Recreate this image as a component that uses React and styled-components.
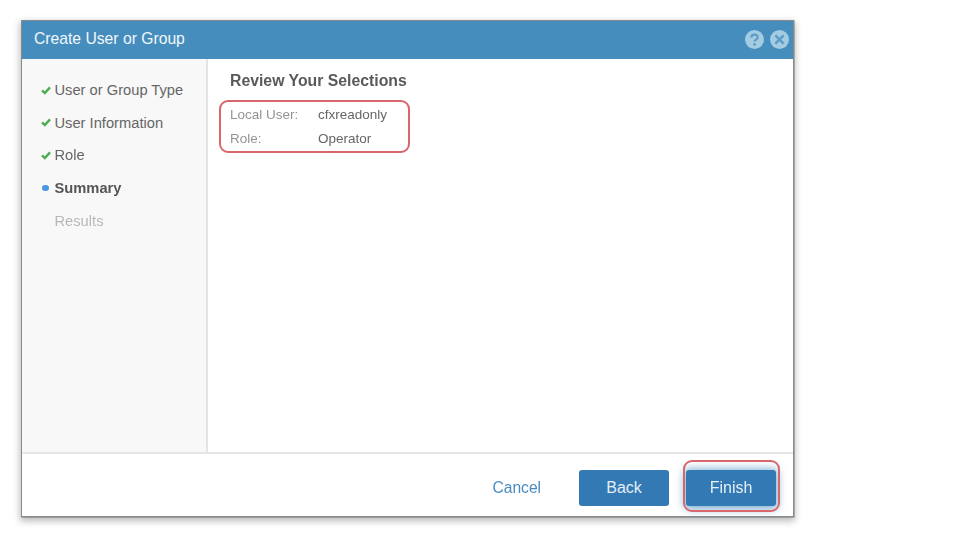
import React from "react";
import styled, { createGlobalStyle } from "styled-components";

const GlobalStyle = createGlobalStyle`
  html, body {
    margin: 0;
    padding: 0;
    background: #fff;
    font-family: "Liberation Sans", Arial, sans-serif;
  }
`;

const Page = styled.div`
  width: 960px;
  height: 540px;
  padding: 21px 0 0 22px;
  box-sizing: border-box;
  overflow: hidden;
  filter: blur(0.35px);
`;

const Dialog = styled.div`
  width: 771px;
  height: 495px;
  display: flex;
  flex-direction: column;
  background: #fff;
  box-shadow: 0 0 0 1px #8a8a8a, 0.5px 0.5px 0 1px #777, 0 3px 7px 2px rgba(0, 0, 0, 0.28);
`;

const Header = styled.div`
  height: 38px;
  flex: none;
  display: flex;
  align-items: center;
  justify-content: space-between;
  padding: 0 4px 0 12px;
  background: #458dbd;
`;

const Title = styled.div`
  margin-bottom: 2px;
  font-size: 15.7px;
  color: #f2f7fa;
`;

const HeaderIcons = styled.div`
  display: flex;
  align-items: center;
  gap: 6px;
  margin-bottom: 2px;
`;

const Body = styled.div`
  flex: 1;
  display: flex;
  min-height: 0;
`;

const Sidebar = styled.ul`
  width: 184px;
  flex: none;
  margin: 0;
  padding: 15px 0 0 0;
  list-style: none;
  background: #f8f8f8;
  border-right: 2px solid #e4e4e4;
`;

const Step = styled.li`
  height: 32.6px;
  display: flex;
  align-items: center;
  font-size: 14.7px;
  font-weight: ${p => (p.$state === "active" ? 700 : 400)};
  color: ${p => (p.$state === "pending" ? "#b8b8b8" : p.$state === "active" ? "#555" : "#666")};
`;

const StepMark = styled.span`
  width: 32.5px;
  flex: none;
  display: flex;
  justify-content: flex-end;
  padding-right: 4px;
  box-sizing: border-box;
`;

const Dot = styled.span`
  width: 6.5px;
  height: 6.5px;
  margin-right: 2px;
  border-radius: 50%;
  background: #4a98e0;
`;

const Content = styled.div`
  flex: 1;
  padding: 13px 0 0 22px;
`;

const Heading = styled.h2`
  margin: 0 0 12px;
  font-size: 15.8px;
  line-height: 18px;
  font-weight: 700;
  color: #5a5a5a;
`;

const Selections = styled.dl`
  position: relative;
  display: grid;
  grid-template-columns: 88px 1fr;
  grid-auto-rows: 24px;
  align-items: center;
  margin: 0;
  font-size: 13.5px;
`;

const Label = styled.dt`
  color: #949494;
`;

const Value = styled.dd`
  margin: 0;
  color: #666;
`;

const Callout = styled.div`
  position: absolute;
  border: 2px solid #d8666a;
  pointer-events: none;
  box-sizing: border-box;
`;

const SelectionCallout = styled(Callout)`
  left: -11px;
  top: -2px;
  width: 191px;
  height: 53px;
  border-radius: 9px;
`;

const Footer = styled.div`
  height: 64px;
  flex: none;
  display: flex;
  align-items: center;
  justify-content: flex-end;
  padding: 6px 17px 0 0;
  box-sizing: border-box;
  border-top: 2px solid #e6e6e6;
`;

const LinkButton = styled.button`
  width: 48.5px;
  height: 36px;
  margin-right: 38px;
  padding: 0;
  border: 0;
  background: none;
  font: inherit;
  font-size: 15.6px;
  white-space: nowrap;
  color: #4a8cc0;
`;

const Button = styled.button`
  position: relative;
  width: 90px;
  height: 36px;
  margin-left: ${p => (p.$focused ? "17px" : "0")};
  padding: 0;
  border: 0;
  border-radius: 3px;
  background: #337ab4;
  font: inherit;
  font-size: 16px;
  color: #e4eef5;
  box-shadow: ${p => (p.$focused ? "0 1px 8px 2px rgba(70, 140, 190, 0.7)" : "none")};
`;

const FinishCallout = styled(Callout)`
  left: -3px;
  top: -10px;
  width: 97px;
  height: 52px;
  border-radius: 9px;
`;

const Check = () => (
  <svg width="10" height="9" viewBox="0 0 10 9">
    <path d="M1 4.4 L3.8 7 L9 1.4" fill="none" stroke="#4aab52" strokeWidth="2.3" />
  </svg>
);

const HelpIcon = () => (
  <svg width="19" height="19" viewBox="0 0 19 19">
    <circle cx="9.5" cy="9.5" r="9.5" fill="#a3cbe2" />
    <path d="M6.4 7.5 C6.4 3.6 12.6 3.6 12.6 7.3 C12.6 9.6 9.6 9.5 9.6 11.6" fill="none" stroke="#5c9cc6" strokeWidth="2.2" />
    <circle cx="9.6" cy="14.4" r="1.4" fill="#5c9cc6" />
  </svg>
);

const CloseIcon = () => (
  <svg width="19" height="19" viewBox="0 0 19 19">
    <circle cx="9.5" cy="9.5" r="9.5" fill="#a3cbe2" />
    <path d="M5.4 5.4 L13.6 13.6 M13.6 5.4 L5.4 13.6" fill="none" stroke="#5c9cc6" strokeWidth="2.4" />
  </svg>
);

const steps = [
  { label: "User or Group Type", state: "done" },
  { label: "User Information", state: "done" },
  { label: "Role", state: "done" },
  { label: "Summary", state: "active" },
  { label: "Results", state: "pending" },
];

export default function App() {
  return (
    <Page>
      <GlobalStyle />
      <Dialog>
        <Header>
          <Title>Create User or Group</Title>
          <HeaderIcons>
            <HelpIcon />
            <CloseIcon />
          </HeaderIcons>
        </Header>
        <Body>
          <Sidebar>
            {steps.map(step => (
              <Step key={step.label} $state={step.state}>
                <StepMark>
                  {step.state === "done" && <Check />}
                  {step.state === "active" && <Dot />}
                </StepMark>
                {step.label}
              </Step>
            ))}
          </Sidebar>
          <Content>
            <Heading>Review Your Selections</Heading>
            <Selections>
              <Label>Local User:</Label>
              <Value>cfxreadonly</Value>
              <Label>Role:</Label>
              <Value>Operator</Value>
              <SelectionCallout />
            </Selections>
          </Content>
        </Body>
        <Footer>
          <LinkButton>Cancel</LinkButton>
          <Button>Back</Button>
          <Button $focused>
            Finish
            <FinishCallout />
          </Button>
        </Footer>
      </Dialog>
    </Page>
  );
}
